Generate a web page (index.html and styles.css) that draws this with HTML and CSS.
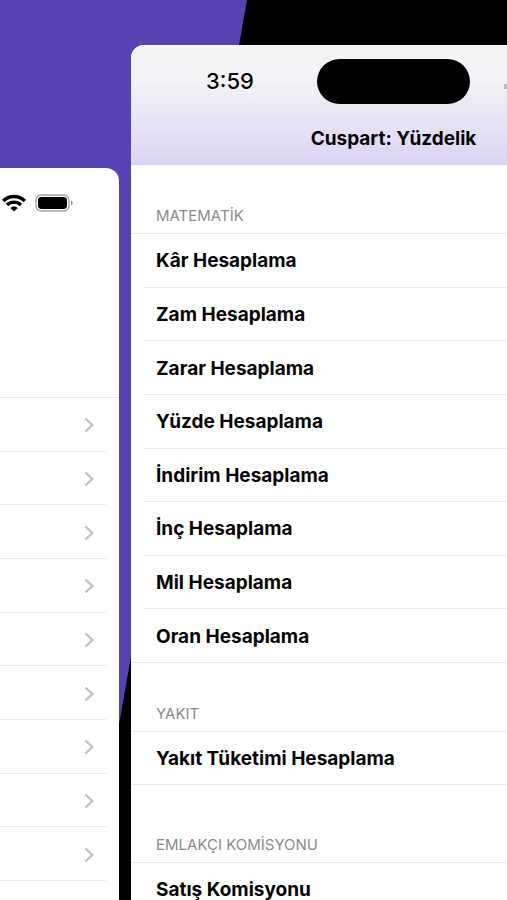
FILE: index.html
```html
<!DOCTYPE html>
<html lang="tr">
<head>
<meta charset="utf-8">
<meta name="viewport" content="width=device-width, initial-scale=1">
<title>Cuspart: Yüzdelik</title>
<link rel="stylesheet" href="styles.css">
</head>
<body>
<main class="stage">
  <section class="phone phone-back">
    <div class="back-status">
      <svg class="wifi" viewBox="0 0 24 18" aria-hidden="true">
        <g fill="none" stroke="#000" stroke-width="3.4">
          <path d="M1.200 6.900a15.600 15.600 0 0 1 21.600 0"/>
          <path d="M5.100 10.900a10 10 0 0 1 13.800 0"/>
        </g>
        <path d="M12 17.600 8.300 13.900a5.400 5.400 0 0 1 7.400 0z"/>
      </svg>
      <svg class="battery" viewBox="0 0 39 18" aria-hidden="true">
        <rect x="1" y="1" width="33" height="16" rx="5" fill="#fff" stroke="#a2a2a2" stroke-width="1.3"/>
        <rect x="3" y="3" width="29" height="12" rx="3.4"/>
        <path d="M36 6.500c2.300.6 2.300 4.400 0 5z" fill="#999"/>
      </svg>
    </div>
    <ul class="back-list">
      <li><svg class="chevron" viewBox="0 0 10 16"><path d="M1.500 1.500 8.300 8l-6.800 6.500"/></svg></li>
      <li><svg class="chevron" viewBox="0 0 10 16"><path d="M1.500 1.500 8.300 8l-6.800 6.500"/></svg></li>
      <li><svg class="chevron" viewBox="0 0 10 16"><path d="M1.500 1.500 8.300 8l-6.800 6.500"/></svg></li>
      <li><svg class="chevron" viewBox="0 0 10 16"><path d="M1.500 1.500 8.300 8l-6.800 6.500"/></svg></li>
      <li><svg class="chevron" viewBox="0 0 10 16"><path d="M1.500 1.500 8.300 8l-6.800 6.500"/></svg></li>
      <li><svg class="chevron" viewBox="0 0 10 16"><path d="M1.500 1.500 8.300 8l-6.800 6.500"/></svg></li>
      <li><svg class="chevron" viewBox="0 0 10 16"><path d="M1.500 1.500 8.300 8l-6.800 6.500"/></svg></li>
      <li><svg class="chevron" viewBox="0 0 10 16"><path d="M1.500 1.500 8.300 8l-6.800 6.500"/></svg></li>
      <li><svg class="chevron" viewBox="0 0 10 16"><path d="M1.500 1.500 8.300 8l-6.800 6.500"/></svg></li>
    </ul>
  </section>

  <section class="phone phone-front">
    <header class="bar">
      <div class="status">
        <span class="time">3:59</span>
        <span class="island"></span>
        <svg class="signal" viewBox="0 0 24 15" aria-hidden="true">
          <rect x="0" y="10" width="4" height="5" rx="1" fill="#b9b8bd"/>
          <rect x="6" y="7" width="4" height="8" rx="1" fill="#b9b8bd"/>
          <rect x="12" y="4" width="4" height="11" rx="1" fill="#b9b8bd"/>
          <rect x="18" y="0" width="4" height="15" rx="1" fill="#b9b8bd"/>
        </svg>
      </div>
      <h1 class="title">Cuspart: Yüzdelik</h1>
    </header>
    <h2 class="group-title">MATEMATİK</h2>
    <ul class="group group-math">
      <li>Kâr Hesaplama</li>
      <li>Zam Hesaplama</li>
      <li>Zarar Hesaplama</li>
      <li>Yüzde Hesaplama</li>
      <li>İndirim Hesaplama</li>
      <li>İnç Hesaplama</li>
      <li>Mil Hesaplama</li>
      <li>Oran Hesaplama</li>
    </ul>
    <h2 class="group-title">YAKIT</h2>
    <ul class="group">
      <li>Yakıt Tüketimi Hesaplama</li>
    </ul>
    <h2 class="group-title group-title-tall">EMLAKÇI KOMİSYONU</h2>
    <ul class="group">
      <li>Satış Komisyonu</li>
    </ul>
  </section>
</main>
</body>
</html>
```
FILE: styles.css
```css
* { box-sizing: border-box; }

body {
  margin: 0;
  background: #000;
  color: #050505;
  font-family: Inter, "Liberation Sans", sans-serif;
}

ul {
  margin: 0;
  padding: 0;
  list-style: none;
}

.stage {
  position: relative;
  display: grid;
  grid-template-columns: 119px minmax(0, 1fr);
  column-gap: 12px;
  height: 100vh;
  overflow: hidden;
}

/* Slanted purple panel behind both phones */
.stage::before {
  content: "";
  position: absolute;
  inset: 0;
  background: #5741b3;
  clip-path: polygon(0 0, 247px 0, 88px 100%, 0 100%);
}

.phone {
  position: relative;
  background: #fff;
  overflow: hidden;
}

.phone-back {
  margin-top: 168px;
  border-top-right-radius: 13px;
}

.back-status {
  display: flex;
  align-items: center;
  gap: 9px;
  height: 70px;
  padding-left: 2px;
}

.wifi { width: 24px; height: 18px; }
.battery { width: 39px; height: 18px; }

.back-list {
  display: flex;
  flex-direction: column;
  height: 484px;
  margin-top: 159px;
  border-top: 1px solid #e6e6e8;
}

.back-list li {
  display: flex;
  flex: 1;
  align-items: center;
  justify-content: flex-end;
  margin-right: 13px;
  padding-top: 2px;
  padding-right: 12px;
  border-bottom: 1px solid #eaeaec;
}

.chevron {
  width: 10px;
  height: 16px;
  fill: none;
  stroke: #c2c2c5;
  stroke-width: 2.3;
}

.phone-front {
  margin-top: 45px;
  border-top-left-radius: 13px;
}

.bar {
  width: 525px;
  height: 120px;
  padding-top: 14px;
  background: linear-gradient(#f5f5f6 0%, #f3f2f6 30%, #e2dcf6 82%, #dbd3f5 100%);
  border-bottom: 1px solid #d6d0e8;
}

.status {
  display: grid;
  grid-template-columns: 1fr 153px 1fr;
  align-items: center;
}

.time {
  padding-left: 12px;
  font-size: 22px;
  font-weight: 500;
  line-height: 45px;
  text-align: center;
}

.island {
  height: 45px;
  border-radius: 23px;
  background: #000;
}

.signal {
  width: 24px;
  height: 15px;
  margin-left: 34px;
}

.title {
  margin: 23px 0 0;
  font-size: 19px;
  font-weight: 700;
  line-height: 24px;
  text-align: center;
}

.group-title {
  display: flex;
  align-items: flex-end;
  height: 68px;
  margin: 0;
  padding: 0 25px 7px;
  color: #8b8b8e;
  font-size: 15px;
  font-weight: 400;
  line-height: 20px;
}

.group-title-tall { height: 77px; }

.group {
  display: flex;
  flex-direction: column;
  height: 54px;
  border-top: 1px solid #e8e8ea;
  border-bottom: 1px solid #e8e8ea;
}

.group-math { height: 430px; }

.group li {
  display: flex;
  flex: 1;
  align-items: center;
  margin-left: 13px;
  padding-top: 2px;
  padding-left: 12px;
  font-size: 19px;
  font-weight: 700;
  line-height: 24px;
}

.group li + li { border-top: 1px solid #eaeaec; }
```
